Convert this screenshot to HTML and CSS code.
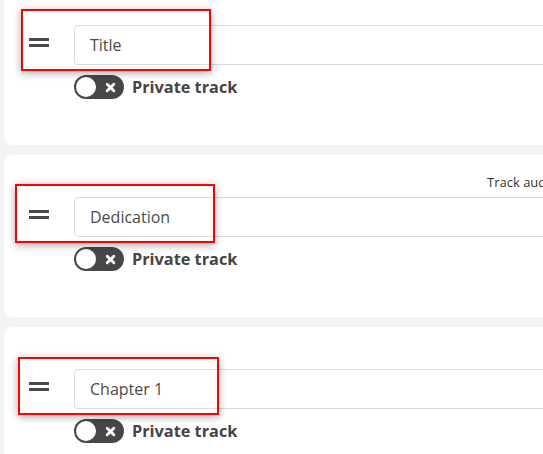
FILE: index.html
```html
<!DOCTYPE html>
<html>
<head>
<meta charset="utf-8">
<link rel="stylesheet" href="styles.css">
</head>
<body>
<div class="list">
  <div class="card">
    <div class="card-head"></div>
    <div class="row">
      <div class="handle"><span></span><span></span></div>
      <div class="field">Title</div>
    </div>
    <div class="toggle-row">
      <div class="toggle"><span class="knob"></span><svg class="x" viewBox="0 0 10 10"><path d="M2 2L8 8M8 2L2 8"/></svg></div>
      <span class="label">Private track</span>
    </div>
    <div class="mark mark-1"></div>
  </div>
  <div class="card">
    <div class="card-head"><span class="col-title">Track audio</span></div>
    <div class="row">
      <div class="handle"><span></span><span></span></div>
      <div class="field">Dedication</div>
    </div>
    <div class="toggle-row">
      <div class="toggle"><span class="knob"></span><svg class="x" viewBox="0 0 10 10"><path d="M2 2L8 8M8 2L2 8"/></svg></div>
      <span class="label">Private track</span>
    </div>
    <div class="mark mark-2"></div>
  </div>
  <div class="card">
    <div class="card-head"></div>
    <div class="row">
      <div class="handle"><span></span><span></span></div>
      <div class="field">Chapter 1</div>
    </div>
    <div class="toggle-row">
      <div class="toggle"><span class="knob"></span><svg class="x" viewBox="0 0 10 10"><path d="M2 2L8 8M8 2L2 8"/></svg></div>
      <span class="label">Private track</span>
    </div>
    <div class="mark mark-3"></div>
  </div>
</div>
</body>
</html>
```
FILE: styles.css
```css
html, body {
  margin: 0;
  padding: 0;
  background: #f3f3f3;
  overflow: hidden;
  font-family: "Open Sans", "Liberation Sans", sans-serif;
  color: #444;
}
.list {
  display: flex;
  flex-direction: column;
  gap: 10px;
  margin-top: -17px;
  padding-left: 4px;
  width: 800px;
}
.card {
  position: relative;
  background: #fff;
  border-radius: 8px;
  height: 162px;
  box-sizing: border-box;
  padding-top: 18px;
}
.card-head {
  height: 24px;
  display: flex;
  padding-left: 483px;
}
.col-title {
  font-size: 13px;
  line-height: 18px;
  color: #333;
  white-space: nowrap;
}
.row {
  display: flex;
  align-items: center;
}
.handle {
  width: 20px;
  margin-left: 25px;
  margin-right: 25px;
  display: flex;
  flex-direction: column;
  gap: 3px;
  margin-top: -6px;
}
.handle span {
  display: block;
  height: 3px;
  background: #4a4a4a;
}
.field {
  flex: 1;
  height: 40px;
  box-sizing: border-box;
  border: 1px solid #dcdcdc;
  border-radius: 4px;
  padding-left: 15px;
  font-size: 16px;
  line-height: 38px;
  color: #4a4a4a;
}
.toggle-row {
  display: flex;
  align-items: center;
  margin-top: 10px;
  margin-left: 70px;
  gap: 8px;
}
.toggle {
  position: relative;
  width: 50px;
  height: 24px;
  border-radius: 12px;
  background: #474747;
  display: flex;
  align-items: center;
  padding-left: 2px;
  box-sizing: border-box;
}
.knob {
  width: 20px;
  height: 20px;
  border-radius: 50%;
  background: #fff;
}
.x {
  width: 11px;
  height: 11px;
  margin-left: 9px;
  stroke: #fff;
  stroke-width: 2.6;
  stroke-linecap: round;
  fill: none;
}
.label {
  font-weight: 700;
  font-size: 16.3px;
  color: #444;
  line-height: 24px;
}
.mark {
  position: absolute;
  border: 2px solid #f00;
  box-sizing: border-box;
  box-shadow: 0 2px 8px rgba(0, 0, 0, 0.35);
}
.mark-1 { left: 17px; top: 26px; width: 190px; height: 62px; }
.mark-2 { left: 11px; top: 29px; width: 200px; height: 59px; }
.mark-3 { left: 14px; top: 30px; width: 201px; height: 58px; }
```
